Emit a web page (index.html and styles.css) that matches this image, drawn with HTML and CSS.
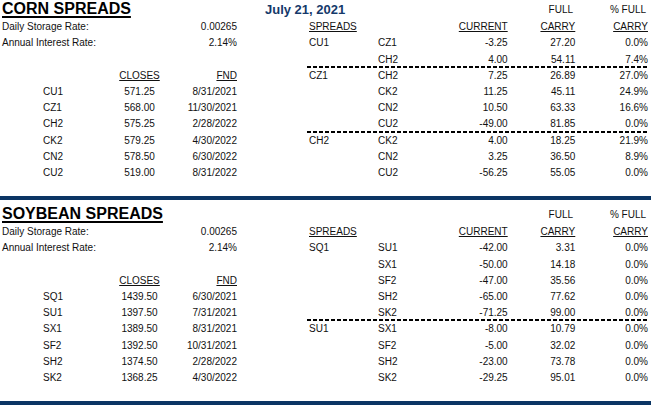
FILE: index.html
```html
<!DOCTYPE html>
<html>
<head>
<meta charset="utf-8">
<link rel="stylesheet" href="styles.css">
</head>
<body>
<section class="block">
  <div class="inner">
    <div class="top">
      <h1 class="title">CORN SPREADS</h1>
      <div class="date">July 21, 2021</div>
      <div class="num">FULL</div>
      <div class="num">% FULL</div>
    </div>
    <div class="body">
      <div class="left">
        <div class="lrow"><span class="lbl">Daily Storage Rate:</span><span class="num">0.00265</span></div>
        <div class="lrow"><span class="lbl">Annual Interest Rate:</span><span class="num">2.14%</span></div>
        <div class="lrow"></div>
        <div class="lrow"><span></span><span></span><span class="ctr u">CLOSES</span><span class="num u">FND</span></div>
        <div class="lrow"><span></span><span>CU1</span><span class="ctr">571.25</span><span class="num">8/31/2021</span></div>
        <div class="lrow"><span></span><span>CZ1</span><span class="ctr">568.00</span><span class="num">11/30/2021</span></div>
        <div class="lrow"><span></span><span>CH2</span><span class="ctr">575.25</span><span class="num">2/28/2022</span></div>
        <div class="lrow"><span></span><span>CK2</span><span class="ctr">579.25</span><span class="num">4/30/2022</span></div>
        <div class="lrow"><span></span><span>CN2</span><span class="ctr">578.50</span><span class="num">6/30/2022</span></div>
        <div class="lrow"><span></span><span>CU2</span><span class="ctr">519.00</span><span class="num">8/31/2022</span></div>
      </div>
      <div class="right">
        <div class="rrow"><span class="u">SPREADS</span><span></span><span class="num u">CURRENT</span><span class="num u">CARRY</span><span class="num u">CARRY</span></div>
        <div class="group sep">
          <div class="rrow"><span>CU1</span><span>CZ1</span><span class="num">-3.25</span><span class="num">27.20</span><span class="num">0.0%</span></div>
          <div class="rrow"><span></span><span>CH2</span><span class="num">4.00</span><span class="num">54.11</span><span class="num">7.4%</span></div>
        </div>
        <div class="group sep">
          <div class="rrow"><span>CZ1</span><span>CH2</span><span class="num">7.25</span><span class="num">26.89</span><span class="num">27.0%</span></div>
          <div class="rrow"><span></span><span>CK2</span><span class="num">11.25</span><span class="num">45.11</span><span class="num">24.9%</span></div>
          <div class="rrow"><span></span><span>CN2</span><span class="num">10.50</span><span class="num">63.33</span><span class="num">16.6%</span></div>
          <div class="rrow"><span></span><span>CU2</span><span class="num">-49.00</span><span class="num">81.85</span><span class="num">0.0%</span></div>
        </div>
        <div class="group">
          <div class="rrow"><span>CH2</span><span>CK2</span><span class="num">4.00</span><span class="num">18.25</span><span class="num">21.9%</span></div>
          <div class="rrow"><span></span><span>CN2</span><span class="num">3.25</span><span class="num">36.50</span><span class="num">8.9%</span></div>
          <div class="rrow"><span></span><span>CU2</span><span class="num">-56.25</span><span class="num">55.05</span><span class="num">0.0%</span></div>
        </div>
      </div>
    </div>
  </div>
  <div class="bar"></div>
</section>

<section class="block">
  <div class="inner">
    <div class="top">
      <h1 class="title">SOYBEAN SPREADS</h1>
      <div class="date"></div>
      <div class="num">FULL</div>
      <div class="num">% FULL</div>
    </div>
    <div class="body">
      <div class="left">
        <div class="lrow"><span class="lbl">Daily Storage Rate:</span><span class="num">0.00265</span></div>
        <div class="lrow"><span class="lbl">Annual Interest Rate:</span><span class="num">2.14%</span></div>
        <div class="lrow"></div>
        <div class="lrow"><span></span><span></span><span class="ctr u">CLOSES</span><span class="num u">FND</span></div>
        <div class="lrow"><span></span><span>SQ1</span><span class="ctr">1439.50</span><span class="num">6/30/2021</span></div>
        <div class="lrow"><span></span><span>SU1</span><span class="ctr">1397.50</span><span class="num">7/31/2021</span></div>
        <div class="lrow"><span></span><span>SX1</span><span class="ctr">1389.50</span><span class="num">8/31/2021</span></div>
        <div class="lrow"><span></span><span>SF2</span><span class="ctr">1392.50</span><span class="num">10/31/2021</span></div>
        <div class="lrow"><span></span><span>SH2</span><span class="ctr">1374.50</span><span class="num">2/28/2022</span></div>
        <div class="lrow"><span></span><span>SK2</span><span class="ctr">1368.25</span><span class="num">4/30/2022</span></div>
      </div>
      <div class="right">
        <div class="rrow"><span class="u">SPREADS</span><span></span><span class="num u">CURRENT</span><span class="num u">CARRY</span><span class="num u">CARRY</span></div>
        <div class="group sep">
          <div class="rrow"><span>SQ1</span><span>SU1</span><span class="num">-42.00</span><span class="num">3.31</span><span class="num">0.0%</span></div>
          <div class="rrow"><span></span><span>SX1</span><span class="num">-50.00</span><span class="num">14.18</span><span class="num">0.0%</span></div>
          <div class="rrow"><span></span><span>SF2</span><span class="num">-47.00</span><span class="num">35.56</span><span class="num">0.0%</span></div>
          <div class="rrow"><span></span><span>SH2</span><span class="num">-65.00</span><span class="num">77.62</span><span class="num">0.0%</span></div>
          <div class="rrow"><span></span><span>SK2</span><span class="num">-71.25</span><span class="num">99.00</span><span class="num">0.0%</span></div>
        </div>
        <div class="group">
          <div class="rrow"><span>SU1</span><span>SX1</span><span class="num">-8.00</span><span class="num">10.79</span><span class="num">0.0%</span></div>
          <div class="rrow"><span></span><span>SF2</span><span class="num">-5.00</span><span class="num">32.02</span><span class="num">0.0%</span></div>
          <div class="rrow"><span></span><span>SH2</span><span class="num">-23.00</span><span class="num">73.78</span><span class="num">0.0%</span></div>
          <div class="rrow"><span></span><span>SK2</span><span class="num">-29.25</span><span class="num">95.01</span><span class="num">0.0%</span></div>
        </div>
      </div>
    </div>
  </div>
  <div class="bar"></div>
</section>
</body>
</html>
```

FILE: styles.css
```css
* { box-sizing: border-box; }
html, body { margin: 0; padding: 0; background: #fff; }
body {
  font-family: "Liberation Sans", Arial, sans-serif;
  font-size: 10px;
  color: #111;
  width: 651px;
  overflow: hidden;
}
.block { height: 205px; }
.inner { padding: 0 0 0 2px; height: 196px; }
.top {
  display: grid;
  grid-template-columns: 263px 81px 227px 73px;
  height: 19.2px;
  line-height: 19.2px;
  align-items: start;
}
.title {
  margin: 0;
  font-size: 16px;
  font-weight: bold;
  line-height: 18px;
  color: #000;
  text-decoration: underline;
  text-decoration-thickness: 2px;
  text-underline-offset: 2px;
  white-space: nowrap;
}
.date {
  font-size: 13px;
  font-weight: bold;
  color: #15396a;
  line-height: 20px;
  white-space: nowrap;
}
.body { display: flex; }
.left { width: 235px; }
.lrow {
  display: grid;
  grid-template-columns: 41px 75px 43px 76px;
  height: 16.2px;
  line-height: 16.2px;
  white-space: nowrap;
}
.lbl { grid-column: 1 / 4; }
.right { margin-left: 70px; width: 342px; }
.rrow {
  display: grid;
  grid-template-columns: 69px 67px 62.7px 67.6px 72.7px;
  padding-left: 2px;
  height: 16.2px;
  line-height: 16.2px;
  white-space: nowrap;
}
.rrow > span:first-child { margin-left: 0; }
.num { text-align: right; }
.ctr { text-align: center; }
.u { text-decoration: underline; text-underline-offset: 1px; }
.group.sep {
  background: repeating-linear-gradient(90deg, #000 0 4px, transparent 4px 6px) left bottom / 100% 2px no-repeat;
}
.bar { height: 4px; background: #0b3564; }
```
